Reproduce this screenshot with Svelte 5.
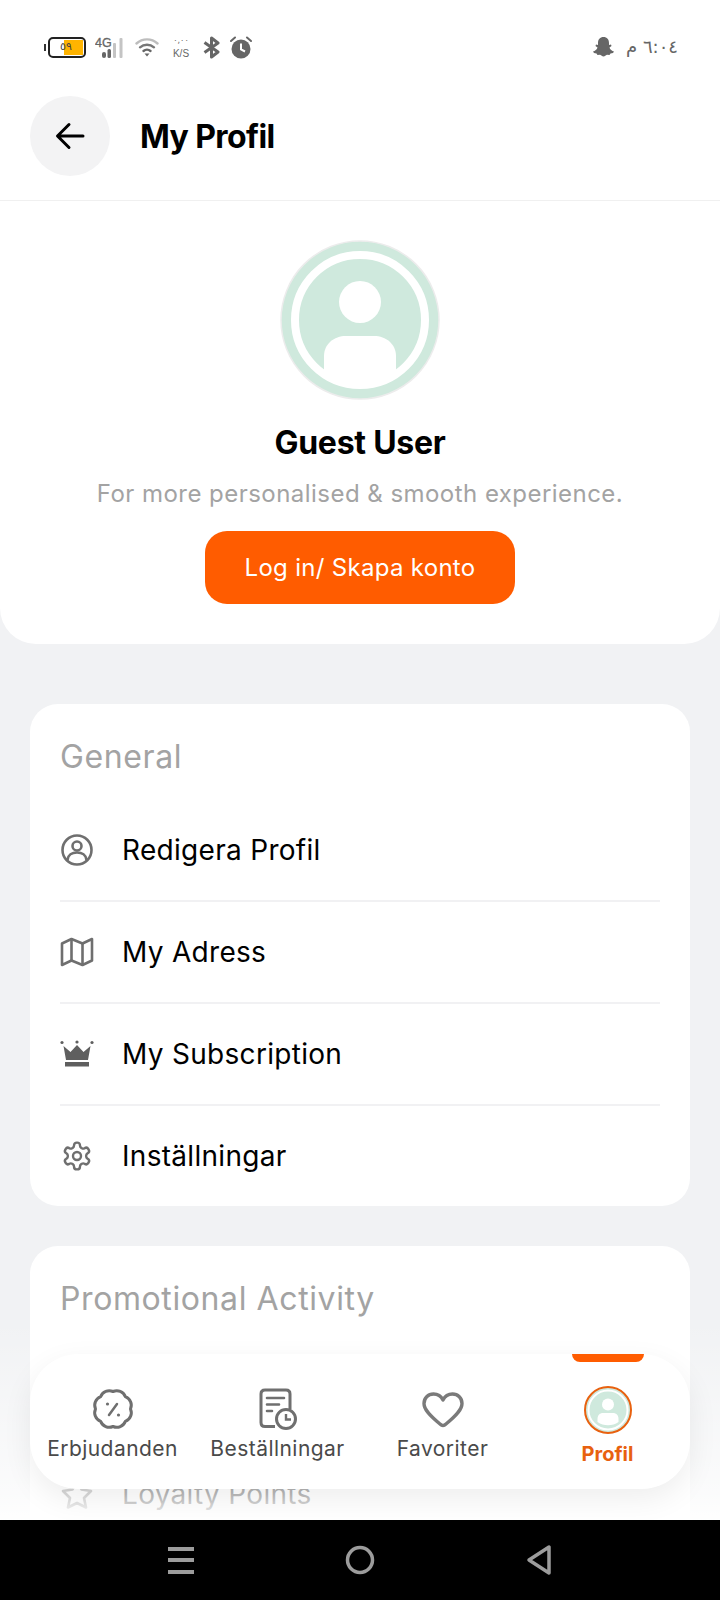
<script>
  const general = [
    { icon: 'user', label: 'Redigera Profil' },
    { icon: 'map', label: 'My Adress' },
    { icon: 'crown', label: 'My Subscription' },
    { icon: 'gear', label: 'Inställningar' }
  ];
  const tabs = [
    { icon: 'badge', label: 'Erbjudanden' },
    { icon: 'orders', label: 'Beställningar' },
    { icon: 'heart', label: 'Favoriter' }
  ];
  // scalloped outline for the offers badge
  const badgePath = (() => {
    const bumps = 8, cx = 21, cy = 21, outer = 19, inner = 16.5;
    let d = '';
    for (let i = 0; i < bumps; i++) {
      const a0 = (i / bumps) * Math.PI * 2 - Math.PI / 2;
      const a1 = ((i + 0.5) / bumps) * Math.PI * 2 - Math.PI / 2;
      const a2 = ((i + 1) / bumps) * Math.PI * 2 - Math.PI / 2;
      const p = (a, r) => `${(cx + Math.cos(a) * r).toFixed(2)} ${(cy + Math.sin(a) * r).toFixed(2)}`;
      if (i === 0) d += `M${p(a0, inner + 1)}`;
      d += `Q${p(a0 + (a1 - a0) * 0.5, outer + 0.5)} ${p(a1, outer)}Q${p(a1 + (a2 - a1) * 0.5, outer + 0.5)} ${p(a2, inner + 1)}`;
    }
    return d + 'Z';
  })();
</script>

<div class="page">
  <div class="status">
    <div class="status-left">
      <div class="battery"><span class="tip"></span><div class="cell"><span class="fill"></span><span class="pct">٥٩</span></div></div>
      <svg class="s-net" width="29" height="24" viewBox="0 0 29 24">
        <text x="0" y="12" class="net-text">4G</text>
        <rect x="7" y="17" width="4" height="6" rx="2" fill="#666" />
        <rect x="12.500" y="14" width="3.500" height="9" rx="1.500" fill="#666" />
        <rect x="18" y="8" width="3" height="15" rx="1" fill="#c4c4c4" />
        <rect x="24.500" y="3" width="3" height="20" rx="1" fill="#c4c4c4" />
      </svg>
      <svg class="s-wifi" width="24" height="20" viewBox="0 0 24 20" fill="none" stroke-linecap="round">
        <path d="M1.500 6.500C7.500 1 16.500 1 22.500 6.500" stroke="#bdbdbd" stroke-width="2.400" />
        <path d="M5 10.300C9 6.800 15 6.800 19 10.300" stroke="#777" stroke-width="2.400" />
        <path d="M8.500 14C10.500 12.300 13.500 12.300 15.500 14" stroke="#666" stroke-width="2.400" />
        <path d="M9.500 16.500H14.500L12 19.500Z" fill="#666" />
      </svg>
      <div class="speed"><span>٠,٠٠</span><b>K/S</b></div>
      <svg class="s-bt" width="18" height="23" viewBox="0 0 18 23" fill="none" stroke="#666" stroke-width="3" stroke-linejoin="round">
        <path d="M1.500 6.500L15 16L8.500 21V2L15 7L1.500 16.500" />
      </svg>
      <svg class="s-alarm" width="22" height="23" viewBox="0 0 22 23">
        <circle cx="11" cy="13" r="9.500" fill="#666" />
        <path d="M11 7.500V13.500L15 15.500" fill="none" stroke="#fff" stroke-width="2" />
        <path d="M1 5L5 1.500M21 5L17 1.500" stroke="#666" stroke-width="2" stroke-linecap="round" />
      </svg>
    </div>
    <div class="status-right">
      <svg width="21" height="20" viewBox="0 0 21 20">
        <path d="M10.500 0C14 0 16 2.500 16 6V8L18 7.500L18.500 9L16.500 10.500C17 12.500 19 14 21 14.500L20 16L17.500 16.500L16.500 18L14 17.800C12.500 18.500 12 19.500 10.500 19.500C9 19.500 8.500 18.500 7 17.800L4.500 18L3.500 16.500L1 16L0 14.500C2 14 4 12.500 4.500 10.500L2.500 9L3 7.500L5 8V6C5 2.500 7 0 10.500 0Z" fill="#666" />
      </svg>
      <span class="time" dir="rtl">٦:٠٤ م</span>
    </div>
  </div>

  <header class="topbar">
    <button class="back" aria-label="Back">
      <svg width="30" height="28" viewBox="0 0 30 28" fill="none" stroke="#000" stroke-width="3" stroke-linecap="round" stroke-linejoin="round">
        <path d="M28 14H3M14 2.500L2.500 14L14 25.500" />
      </svg>
    </button>
    <h1>My Profil</h1>
  </header>

  <section class="hero">
    <svg class="avatar" width="160" height="160" viewBox="0 0 160 160">
      <circle cx="80" cy="80" r="79" fill="#cfe9dd" stroke="#ececec" stroke-width="1.500" />
      <circle cx="80" cy="80" r="65" fill="none" stroke="#fff" stroke-width="8" />
      <circle cx="80" cy="62" r="21" fill="#fff" />
      <path d="M44 131V116C44 104 54 96 66 96H94C106 96 116 104 116 116V131A62 62 0 0 1 44 131Z" fill="#fff" />
    </svg>
    <h2>Guest User</h2>
    <p>For more personalised &amp; smooth experience.</p>
    <button class="login">Log in/ Skapa konto</button>
  </section>

  <section class="card">
    <h3>General</h3>
    {#each general as row, i}
      <div class="row" class:last={i === general.length - 1}>
        <span class="row-icon">
          {#if row.icon === 'user'}
            <svg width="34" height="34" viewBox="0 0 34 34" fill="none" stroke="#6f6f6f" stroke-width="2.600">
              <circle cx="17" cy="17" r="14.500" />
              <circle cx="17" cy="13" r="4.500" />
              <path d="M7.500 27C8 22 12 19.500 17 19.500C22 19.500 26 22 26.500 27" />
            </svg>
          {:else if row.icon === 'map'}
            <svg width="34" height="32" viewBox="0 0 34 32" fill="none" stroke="#6f6f6f" stroke-width="2.600" stroke-linejoin="round">
              <path d="M2 7.500L11.500 3L22.500 7.500L32 3V24.500L22.500 29L11.500 24.500L2 29Z" />
              <path d="M11.500 3V24.500M22.500 7.500V29" />
            </svg>
          {:else if row.icon === 'crown'}
            <svg width="34" height="28" viewBox="0 0 34 28" fill="#5f5f5f">
              <path d="M3.500 6L10.500 12L17 5L23.500 12L30.500 6L28 20H6Z" />
              <rect x="5" y="22" width="24" height="4.500" />
              <circle cx="2" cy="2.500" r="1.600" />
              <circle cx="17" cy="2" r="1.600" />
              <circle cx="32" cy="2.500" r="1.600" />
            </svg>
          {:else}
            <svg width="32" height="32" viewBox="0 0 24 24" fill="none" stroke="#6f6f6f" stroke-width="1.800" stroke-linejoin="round">
              <circle cx="12" cy="12" r="3" />
              <path d="M12.220 2h-.440a2 2 0 0 0-2 2v.180a2 2 0 0 1-1 1.730l-.430.250a2 2 0 0 1-2 0l-.150-.080a2 2 0 0 0-2.730.730l-.220.380a2 2 0 0 0 .730 2.730l.150.100a2 2 0 0 1 1 1.720v.510a2 2 0 0 1-1 1.740l-.150.090a2 2 0 0 0-.730 2.730l.220.380a2 2 0 0 0 2.730.730l.150-.080a2 2 0 0 1 2 0l.430.250a2 2 0 0 1 1 1.730V20a2 2 0 0 0 2 2h.440a2 2 0 0 0 2-2v-.180a2 2 0 0 1 1-1.730l.430-.250a2 2 0 0 1 2 0l.150.080a2 2 0 0 0 2.730-.730l.220-.390a2 2 0 0 0-.730-2.730l-.150-.080a2 2 0 0 1-1-1.740v-.500a2 2 0 0 1 1-1.740l.150-.090a2 2 0 0 0 .730-2.730l-.220-.380a2 2 0 0 0-2.730-.730l-.150.080a2 2 0 0 1-2 0l-.430-.250a2 2 0 0 1-1-1.730V4a2 2 0 0 0-2-2z" />
            </svg>
          {/if}
        </span>
        <span class="row-label">{row.label}</span>
      </div>
    {/each}
  </section>

  <section class="card promo">
    <h3>Promotional Activity</h3>
    <div class="row last hidden-gap">
      <span class="row-icon">
        <svg width="34" height="32" viewBox="0 0 34 32" fill="none" stroke="#6f6f6f" stroke-width="2.600" stroke-linejoin="round">
          <path d="M17 3L21.500 11.500L31 13L24 20L26 29.500L17 25L8 29.500L10 20L3 13L12.500 11.500Z" />
        </svg>
      </span>
      <span class="row-label">Loyalty Points</span>
    </div>
  </section>

  <div class="fade"></div>

  <nav class="tabs">
    {#each tabs as tab}
      <div class="tab">
        <span class="tab-icon">
          {#if tab.icon === 'badge'}
            <svg width="42" height="42" viewBox="0 0 42 42" fill="none" stroke="#6f6f6f" stroke-width="3" stroke-linejoin="round">
              <path d={badgePath} />
              <path d="M25 16L17 27" stroke-linecap="round" stroke-width="2.500" />
              <circle cx="15.500" cy="16" r="1.600" fill="#6f6f6f" stroke="none" />
              <circle cx="26.500" cy="27" r="1.600" fill="#6f6f6f" stroke="none" />
            </svg>
          {:else if tab.icon === 'orders'}
            <svg width="38" height="42" viewBox="0 0 38 42" fill="none" stroke="#6f6f6f" stroke-width="3">
              <path d="M16 38.500H6C3.500 38.500 2 37 2 34.500V6C2 3.500 3.500 2 6 2H27C29.500 2 31 3.500 31 6V21" />
              <path d="M8 10H25M8 16.500H20M8 23H13" stroke-linecap="round" stroke-width="2.600" />
              <circle cx="27" cy="31" r="9.500" fill="#fff" />
              <path d="M27 26V31.500H32" stroke-width="2.400" />
            </svg>
          {:else}
            <svg width="42" height="38" viewBox="0 0 42 38" fill="none" stroke="#7a7a7a" stroke-width="3.400" stroke-linejoin="round">
              <path d="M21 10C19 6 15.500 4 11.500 4C6 4 2 8 2 13.500C2 19 6.500 24.500 18 34C20 36 22 36 24 34C35.500 24.500 40 19 40 13.500C40 8 36 4 30.500 4C26.500 4 23 6 21 10Z" />
            </svg>
          {/if}
        </span>
        <span class="tab-label">{tab.label}</span>
      </div>
    {/each}
    <div class="tab active">
      <span class="marker"></span>
      <svg width="48" height="48" viewBox="0 0 48 48">
        <circle cx="24" cy="24" r="23" fill="#cfe9dd" stroke="#e8610f" stroke-width="2" />
        <circle cx="24" cy="24" r="19.500" fill="none" stroke="#fff" stroke-width="2" />
        <circle cx="24" cy="18.500" r="6" fill="#fff" />
        <path d="M13.500 36V33C13.500 29 16 27 19 27H29C32 27 34.500 29 34.500 33V36A18.500 18.500 0 0 1 13.500 36Z" fill="#fff" />
      </svg>
      <span class="tab-label">Profil</span>
    </div>
  </nav>

  <div class="sysnav">
    <svg width="28" height="28" viewBox="0 0 28 28" fill="#9c9c9c">
      <rect x="1" y="1" width="26" height="4" />
      <rect x="1" y="12" width="26" height="4" />
      <rect x="1" y="24" width="26" height="4" />
    </svg>
    <svg width="30" height="30" viewBox="0 0 30 30" fill="none" stroke="#9c9c9c" stroke-width="3.500">
      <circle cx="15" cy="15" r="12.500" />
    </svg>
    <svg width="26" height="32" viewBox="0 0 26 32" fill="none" stroke="#9c9c9c" stroke-width="3.500" stroke-linejoin="round">
      <path d="M23 3V29L3 16Z" />
    </svg>
  </div>
</div>

<style>
  :global(body) {
    margin: 0;
    background: #f1f2f4;
  }

  .page {
    position: relative;
    width: 720px;
    height: 1600px;
    overflow: hidden;
    background: #f1f2f4;
    font-family: Inter, "Noto Sans", sans-serif;
    color: #000;
  }

  .status {
    height: 96px;
    box-sizing: border-box;
    padding: 35px 42px 0 44px;
    background: #fff;
    display: flex;
    justify-content: space-between;
    align-items: flex-start;
  }

  .status-left {
    display: flex;
    align-items: center;
    height: 24px;
  }

  .status-right {
    display: flex;
    align-items: center;
    gap: 12px;
    height: 24px;
  }

  .time {
    font-family: "DejaVu Sans", sans-serif;
    font-size: 18px;
    color: #666;
    line-height: 24px;
  }

  .battery {
    display: flex;
    align-items: center;
    width: 42px;
    margin-right: 9px;
    position: relative;
  }

  .tip {
    width: 2px;
    height: 7px;
    background: #333;
    margin-right: 2px;
  }

  .cell {
    position: relative;
    width: 38px;
    height: 21px;
    box-sizing: border-box;
    border: 2px solid #222;
    border-radius: 5px;
    overflow: hidden;
  }

  .fill {
    position: absolute;
    left: 14px;
    top: 1px;
    bottom: 1px;
    width: 19px;
    background: #ffb400;
  }

  .pct {
    position: absolute;
    left: 10px;
    top: 0;
    font-family: "DejaVu Sans", sans-serif;
    font-size: 11px;
    line-height: 15px;
    color: #444;
  }

  .net-text {
    font-family: "Liberation Sans", sans-serif;
    font-size: 12.5px;
    fill: #666;
    stroke: #666;
    stroke-width: 0.3;
  }

  .s-net { margin-right: 11px; }
  .s-wifi { margin-right: 12px; }
  .s-bt { margin-right: 9px; }

  .speed {
    width: 20px;
    margin-right: 12px;
    text-align: center;
    color: #666;
    font-family: "Liberation Sans", sans-serif;
    line-height: 10px;
  }

  .speed span {
    display: block;
    font-family: "DejaVu Sans", sans-serif;
    font-size: 8px;
  }

  .speed b {
    display: block;
    font-size: 10px;
    font-weight: 400;
    margin-top: 3px;
  }

  .topbar {
    height: 105px;
    box-sizing: border-box;
    padding: 0 30px 25px;
    display: flex;
    align-items: center;
    gap: 30px;
    background: #fff;
    border-bottom: 1px solid #f0f0f0;
  }

  .back {
    width: 80px;
    height: 80px;
    padding: 0;
    border: 0;
    border-radius: 50%;
    background: #f3f3f4;
    display: flex;
    align-items: center;
    justify-content: center;
  }

  h1 {
    margin: 2px 0 0;
    font-size: 32px;
    font-weight: 700;
    letter-spacing: -0.6px;
  }

  .hero {
    height: 443px;
    box-sizing: border-box;
    padding-top: 39px;
    background: #fff;
    border-radius: 0 0 36px 36px;
    display: flex;
    flex-direction: column;
    align-items: center;
  }

  .avatar { display: block; }

  h2 {
    margin: 23px 0 0;
    font-size: 32px;
    line-height: 40px;
    font-weight: 700;
    letter-spacing: -0.25px;
  }

  .hero p {
    margin: 15px 0 0;
    font-size: 24px;
    line-height: 32px;
    color: #a3a3a3;
    letter-spacing: 0.46px;
  }

  .login {
    margin-top: 21px;
    width: 310px;
    height: 73px;
    border: 0;
    border-radius: 22px;
    background: #ff5c00;
    color: #fff;
    font-family: inherit;
    font-size: 24px;
    letter-spacing: 0.3px;
  }

  .card {
    margin: 60px 30px 0;
    padding: 0 30px;
    height: 502px;
    box-sizing: border-box;
    background: #fff;
    border-radius: 28px;
  }

  .promo {
    margin-top: 40px;
  }

  h3 {
    margin: 0;
    padding: 33px 0 23px;
    font-size: 32px;
    line-height: 40px;
    font-weight: 400;
    color: #a3a3a3;
    letter-spacing: 0.6px;
  }

  .row {
    height: 102px;
    box-sizing: border-box;
    display: flex;
    align-items: center;
    gap: 28px;
    border-bottom: 2px solid #f1f1f3;
  }

  .row.last {
    border-bottom: 0;
    padding-bottom: 2px;
  }

  .hidden-gap {
    margin-top: 102px;
  }

  .row-icon {
    width: 34px;
    display: flex;
    justify-content: center;
  }

  .row-label {
    font-size: 28px;
    letter-spacing: 0.3px;
  }

  .fade {
    position: absolute;
    left: 0;
    right: 0;
    top: 1320px;
    height: 200px;
    background: linear-gradient(rgba(255, 255, 255, 0), rgba(255, 255, 255, 0.72) 87%, rgba(255, 255, 255, 0.97));
  }

  .tabs {
    position: absolute;
    left: 30px;
    top: 1354px;
    width: 660px;
    height: 135px;
    display: grid;
    grid-template-columns: repeat(4, 1fr);
    background: #fff;
    border-radius: 48px;
    box-shadow: 0 10px 30px rgba(0, 0, 0, 0.07);
  }

  .tab {
    position: relative;
    height: 100%;
    box-sizing: border-box;
    padding-top: 34px;
    display: flex;
    flex-direction: column;
    align-items: center;
    gap: 6px;
    font-size: 21px;
    color: #4a4a4a;
    letter-spacing: 0.45px;
  }

  .tab-icon {
    height: 42px;
    display: flex;
    align-items: center;
    justify-content: center;
  }

  .tab-label {
    line-height: 26px;
  }

  .tab.active {
    padding-top: 32px;
    gap: 7px;
    color: #e8610f;
    font-weight: 700;
    font-size: 20px;
    letter-spacing: 0;
  }

  .marker {
    position: absolute;
    top: 0;
    left: 50%;
    width: 72px;
    height: 8px;
    margin-left: -36px;
    background: #ff5c00;
    border-radius: 0 0 8px 8px;
  }

  .sysnav {
    position: absolute;
    left: 0;
    right: 0;
    bottom: 0;
    height: 80px;
    background: #000;
    display: grid;
    grid-template-columns: 360px 0 360px;
    align-items: center;
    justify-items: center;
  }

  .sysnav svg:nth-child(1) { justify-self: start; margin-left: 167px; }
  .sysnav svg:nth-child(3) { justify-self: start; margin-left: 166px; }
</style>
